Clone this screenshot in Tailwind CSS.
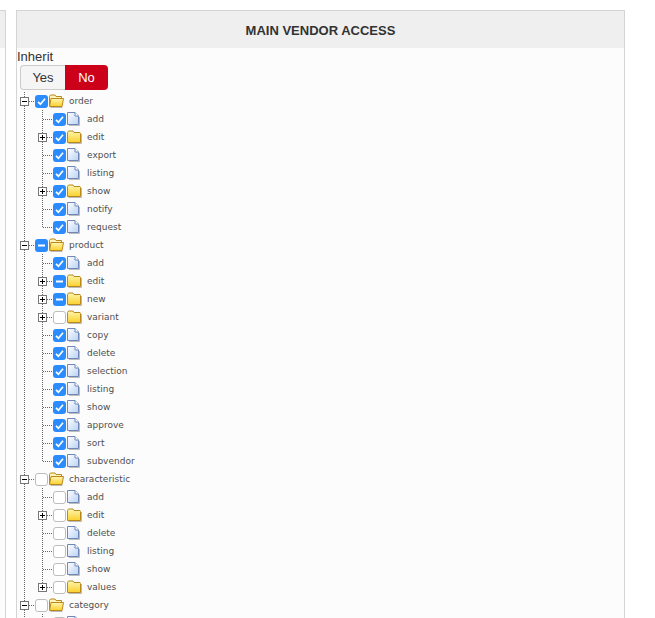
<!DOCTYPE html>
<html><head><meta charset="utf-8"><script src="https://cdn.jsdelivr.net/npm/@tailwindcss/browser@4"></script></head>
<body class="bg-white h-[618px] overflow-hidden font-['Liberation_Sans',sans-serif] text-[#333]">
<svg width="0" height="0" class="absolute">
<defs>
<linearGradient id="fy" x1="0" y1="0" x2="0" y2="1"><stop offset="0" stop-color="#fff6b0"/><stop offset="1" stop-color="#fbd02c"/></linearGradient>
<linearGradient id="fb" x1="0" y1="0" x2="1" y2="1"><stop offset="0" stop-color="#ffffff"/><stop offset="1" stop-color="#b9d2f5"/></linearGradient>
<symbol id="v" viewBox="0 0 18 18"><path d="M7.5 0V18" stroke="#666" stroke-dasharray="1 1"/></symbol>
<symbol id="t" viewBox="0 0 18 18"><path d="M7.5 0V18M8 9.5H18" stroke="#666" stroke-dasharray="1 1"/></symbol>
<symbol id="l" viewBox="0 0 18 18"><path d="M7.5 0V9M8 9.5H18" stroke="#666" stroke-dasharray="1 1"/></symbol>
<symbol id="p" viewBox="0 0 18 18"><path d="M7.5 0V5M7.5 14V18M12 9.5H18" stroke="#666" stroke-dasharray="1 1"/><rect x="3.5" y="5.5" width="8" height="8" fill="#fff" stroke="#777"/><path d="M5 9.5H10M7.5 7V12" stroke="#000"/></symbol>
<symbol id="pe" viewBox="0 0 18 18"><path d="M7.5 0V5M12 9.5H18" stroke="#666" stroke-dasharray="1 1"/><rect x="3.5" y="5.5" width="8" height="8" fill="#fff" stroke="#777"/><path d="M5 9.5H10M7.5 7V12" stroke="#000"/></symbol>
<symbol id="m" viewBox="0 0 18 18"><path d="M7.5 0V5M7.5 14V18M12 9.5H18" stroke="#666" stroke-dasharray="1 1"/><rect x="3.5" y="5.5" width="8" height="8" fill="#fff" stroke="#777"/><path d="M5 9.5H10" stroke="#000"/></symbol>
<symbol id="on" viewBox="0 0 13 13"><rect width="13" height="13" rx="3" fill="#2b8cff"/><path d="M3 6.8 5.4 9.2 10 3.8" fill="none" stroke="#fff" stroke-width="1.7"/></symbol>
<symbol id="mid" viewBox="0 0 13 13"><rect width="13" height="13" rx="3" fill="#2b8cff"/><path d="M3 6.5H10" stroke="#fff" stroke-width="2"/></symbol>
<symbol id="off" viewBox="0 0 13 13"><rect x=".5" y=".5" width="12" height="12" rx="2.5" fill="#fff" stroke="#bdbdbd"/></symbol>
<symbol id="file" viewBox="0 0 13 14"><path d="M2 13.5H12.5V5" fill="none" stroke="#bbb"/><path d="M.5.5H8L11.5 4V12.5H.5Z" fill="url(#fb)" stroke="#7088b8"/><path d="M8 .5V4H11.5" fill="#fff" stroke="#7088b8"/></symbol>
<symbol id="fc" viewBox="0 0 15 14"><path d="M1.5 13.5H14.5V4" fill="none" stroke="#bbb"/><path d="M.5 2.5 1.5 1H6L7 2.5H13L13.5 3.5V12.5H.5Z" fill="url(#fy)" stroke="#b8891e"/></symbol>
<symbol id="fo" viewBox="0 0 15 14"><path d="M1.5 13.5H13.5" stroke="#bbb"/><path d="M.5 12V2.5L1.5 1H6L7 2.5H12.5V5H4Z" fill="#fff3b8" stroke="#b8891e"/><path d="M.5 12.5 2 4.5H14.5L13 12.5Z" fill="url(#fy)" stroke="#b8891e"/></symbol>
</defs>
</svg>
<div class="flex items-start">
<div class="w-[6px] h-[640px] mt-[10px] border-t border-r border-[#d4d4d4] bg-[#fcfcfc] shrink-0"><div class="h-[37px] bg-[#efefef]"></div></div>
<section class="ml-[10px] mt-[10px] w-[609px] h-[640px] border-x border-t border-[#d4d4d4] bg-[#fcfcfc] shrink-0">
<h2 class="h-[37px] bg-[#efefef] flex items-center justify-center text-[13px] font-bold text-[#333] pt-[2px]">MAIN VENDOR ACCESS</h2>
<div class="h-[17px] text-[13px] leading-[18px] text-[#333]">Inherit</div>
<div class="flex ml-[3px] h-[25px] text-[13px] w-[88px]">
<div class="w-[45px] flex items-center justify-center bg-[#f5f5f5] border border-r-0 border-[#ccc] rounded-l-[4px] text-[#333]">Yes</div>
<div class="w-[43px] flex items-center justify-center bg-[#cc0019] rounded-r-[4px] text-white">No</div>
</div>
<div class="mt-[2px] font-['DejaVu_Sans',sans-serif] text-[9px] text-[#4f4f4f] [&_span]:pt-[2px]">

<div class="flex items-center h-[18px]"><svg class="size-[18px]"><use href="#m"/></svg><svg class="size-[13px]"><use href="#on"/></svg><svg class="w-[15px] h-[14px] ml-px"><use href="#fo"/></svg><span class="ml-[5px]">order</span></div>
<div class="flex items-center h-[18px]"><svg class="size-[18px]"><use href="#v"/></svg><svg class="size-[18px]"><use href="#t"/></svg><svg class="size-[13px]"><use href="#on"/></svg><svg class="w-[13px] h-[14px] ml-px"><use href="#file"/></svg><span class="ml-[7px]">add</span></div>
<div class="flex items-center h-[18px]"><svg class="size-[18px]"><use href="#v"/></svg><svg class="size-[18px]"><use href="#p"/></svg><svg class="size-[13px]"><use href="#on"/></svg><svg class="w-[15px] h-[14px] ml-px"><use href="#fc"/></svg><span class="ml-[5px]">edit</span></div>
<div class="flex items-center h-[18px]"><svg class="size-[18px]"><use href="#v"/></svg><svg class="size-[18px]"><use href="#t"/></svg><svg class="size-[13px]"><use href="#on"/></svg><svg class="w-[13px] h-[14px] ml-px"><use href="#file"/></svg><span class="ml-[7px]">export</span></div>
<div class="flex items-center h-[18px]"><svg class="size-[18px]"><use href="#v"/></svg><svg class="size-[18px]"><use href="#t"/></svg><svg class="size-[13px]"><use href="#on"/></svg><svg class="w-[13px] h-[14px] ml-px"><use href="#file"/></svg><span class="ml-[7px]">listing</span></div>
<div class="flex items-center h-[18px]"><svg class="size-[18px]"><use href="#v"/></svg><svg class="size-[18px]"><use href="#p"/></svg><svg class="size-[13px]"><use href="#on"/></svg><svg class="w-[15px] h-[14px] ml-px"><use href="#fc"/></svg><span class="ml-[5px]">show</span></div>
<div class="flex items-center h-[18px]"><svg class="size-[18px]"><use href="#v"/></svg><svg class="size-[18px]"><use href="#t"/></svg><svg class="size-[13px]"><use href="#on"/></svg><svg class="w-[13px] h-[14px] ml-px"><use href="#file"/></svg><span class="ml-[7px]">notify</span></div>
<div class="flex items-center h-[18px]"><svg class="size-[18px]"><use href="#v"/></svg><svg class="size-[18px]"><use href="#l"/></svg><svg class="size-[13px]"><use href="#on"/></svg><svg class="w-[13px] h-[14px] ml-px"><use href="#file"/></svg><span class="ml-[7px]">request</span></div>

<div class="flex items-center h-[18px]"><svg class="size-[18px]"><use href="#m"/></svg><svg class="size-[13px]"><use href="#mid"/></svg><svg class="w-[15px] h-[14px] ml-px"><use href="#fo"/></svg><span class="ml-[5px]">product</span></div>
<div class="flex items-center h-[18px]"><svg class="size-[18px]"><use href="#v"/></svg><svg class="size-[18px]"><use href="#t"/></svg><svg class="size-[13px]"><use href="#on"/></svg><svg class="w-[13px] h-[14px] ml-px"><use href="#file"/></svg><span class="ml-[7px]">add</span></div>
<div class="flex items-center h-[18px]"><svg class="size-[18px]"><use href="#v"/></svg><svg class="size-[18px]"><use href="#p"/></svg><svg class="size-[13px]"><use href="#mid"/></svg><svg class="w-[15px] h-[14px] ml-px"><use href="#fc"/></svg><span class="ml-[5px]">edit</span></div>
<div class="flex items-center h-[18px]"><svg class="size-[18px]"><use href="#v"/></svg><svg class="size-[18px]"><use href="#p"/></svg><svg class="size-[13px]"><use href="#mid"/></svg><svg class="w-[15px] h-[14px] ml-px"><use href="#fc"/></svg><span class="ml-[5px]">new</span></div>
<div class="flex items-center h-[18px]"><svg class="size-[18px]"><use href="#v"/></svg><svg class="size-[18px]"><use href="#p"/></svg><svg class="size-[13px]"><use href="#off"/></svg><svg class="w-[15px] h-[14px] ml-px"><use href="#fc"/></svg><span class="ml-[5px]">variant</span></div>
<div class="flex items-center h-[18px]"><svg class="size-[18px]"><use href="#v"/></svg><svg class="size-[18px]"><use href="#t"/></svg><svg class="size-[13px]"><use href="#on"/></svg><svg class="w-[13px] h-[14px] ml-px"><use href="#file"/></svg><span class="ml-[7px]">copy</span></div>
<div class="flex items-center h-[18px]"><svg class="size-[18px]"><use href="#v"/></svg><svg class="size-[18px]"><use href="#t"/></svg><svg class="size-[13px]"><use href="#on"/></svg><svg class="w-[13px] h-[14px] ml-px"><use href="#file"/></svg><span class="ml-[7px]">delete</span></div>
<div class="flex items-center h-[18px]"><svg class="size-[18px]"><use href="#v"/></svg><svg class="size-[18px]"><use href="#t"/></svg><svg class="size-[13px]"><use href="#on"/></svg><svg class="w-[13px] h-[14px] ml-px"><use href="#file"/></svg><span class="ml-[7px]">selection</span></div>
<div class="flex items-center h-[18px]"><svg class="size-[18px]"><use href="#v"/></svg><svg class="size-[18px]"><use href="#t"/></svg><svg class="size-[13px]"><use href="#on"/></svg><svg class="w-[13px] h-[14px] ml-px"><use href="#file"/></svg><span class="ml-[7px]">listing</span></div>
<div class="flex items-center h-[18px]"><svg class="size-[18px]"><use href="#v"/></svg><svg class="size-[18px]"><use href="#t"/></svg><svg class="size-[13px]"><use href="#on"/></svg><svg class="w-[13px] h-[14px] ml-px"><use href="#file"/></svg><span class="ml-[7px]">show</span></div>
<div class="flex items-center h-[18px]"><svg class="size-[18px]"><use href="#v"/></svg><svg class="size-[18px]"><use href="#t"/></svg><svg class="size-[13px]"><use href="#on"/></svg><svg class="w-[13px] h-[14px] ml-px"><use href="#file"/></svg><span class="ml-[7px]">approve</span></div>
<div class="flex items-center h-[18px]"><svg class="size-[18px]"><use href="#v"/></svg><svg class="size-[18px]"><use href="#t"/></svg><svg class="size-[13px]"><use href="#on"/></svg><svg class="w-[13px] h-[14px] ml-px"><use href="#file"/></svg><span class="ml-[7px]">sort</span></div>
<div class="flex items-center h-[18px]"><svg class="size-[18px]"><use href="#v"/></svg><svg class="size-[18px]"><use href="#l"/></svg><svg class="size-[13px]"><use href="#on"/></svg><svg class="w-[13px] h-[14px] ml-px"><use href="#file"/></svg><span class="ml-[7px]">subvendor</span></div>

<div class="flex items-center h-[18px]"><svg class="size-[18px]"><use href="#m"/></svg><svg class="size-[13px]"><use href="#off"/></svg><svg class="w-[15px] h-[14px] ml-px"><use href="#fo"/></svg><span class="ml-[5px]">characteristic</span></div>
<div class="flex items-center h-[18px]"><svg class="size-[18px]"><use href="#v"/></svg><svg class="size-[18px]"><use href="#t"/></svg><svg class="size-[13px]"><use href="#off"/></svg><svg class="w-[13px] h-[14px] ml-px"><use href="#file"/></svg><span class="ml-[7px]">add</span></div>
<div class="flex items-center h-[18px]"><svg class="size-[18px]"><use href="#v"/></svg><svg class="size-[18px]"><use href="#p"/></svg><svg class="size-[13px]"><use href="#off"/></svg><svg class="w-[15px] h-[14px] ml-px"><use href="#fc"/></svg><span class="ml-[5px]">edit</span></div>
<div class="flex items-center h-[18px]"><svg class="size-[18px]"><use href="#v"/></svg><svg class="size-[18px]"><use href="#t"/></svg><svg class="size-[13px]"><use href="#off"/></svg><svg class="w-[13px] h-[14px] ml-px"><use href="#file"/></svg><span class="ml-[7px]">delete</span></div>
<div class="flex items-center h-[18px]"><svg class="size-[18px]"><use href="#v"/></svg><svg class="size-[18px]"><use href="#t"/></svg><svg class="size-[13px]"><use href="#off"/></svg><svg class="w-[13px] h-[14px] ml-px"><use href="#file"/></svg><span class="ml-[7px]">listing</span></div>
<div class="flex items-center h-[18px]"><svg class="size-[18px]"><use href="#v"/></svg><svg class="size-[18px]"><use href="#t"/></svg><svg class="size-[13px]"><use href="#off"/></svg><svg class="w-[13px] h-[14px] ml-px"><use href="#file"/></svg><span class="ml-[7px]">show</span></div>
<div class="flex items-center h-[18px]"><svg class="size-[18px]"><use href="#v"/></svg><svg class="size-[18px]"><use href="#pe"/></svg><svg class="size-[13px]"><use href="#off"/></svg><svg class="w-[15px] h-[14px] ml-px"><use href="#fc"/></svg><span class="ml-[5px]">values</span></div>

<div class="flex items-center h-[18px]"><svg class="size-[18px]"><use href="#m"/></svg><svg class="size-[13px]"><use href="#off"/></svg><svg class="w-[15px] h-[14px] ml-px"><use href="#fo"/></svg><span class="ml-[5px]">category</span></div>
<div class="flex items-center h-[18px]"><svg class="size-[18px]"><use href="#v"/></svg><svg class="size-[18px]"><use href="#t"/></svg><svg class="size-[13px]"><use href="#off"/></svg><svg class="w-[13px] h-[14px] ml-px"><use href="#file"/></svg></div>

</div>
</section>
</div>
</body></html>
